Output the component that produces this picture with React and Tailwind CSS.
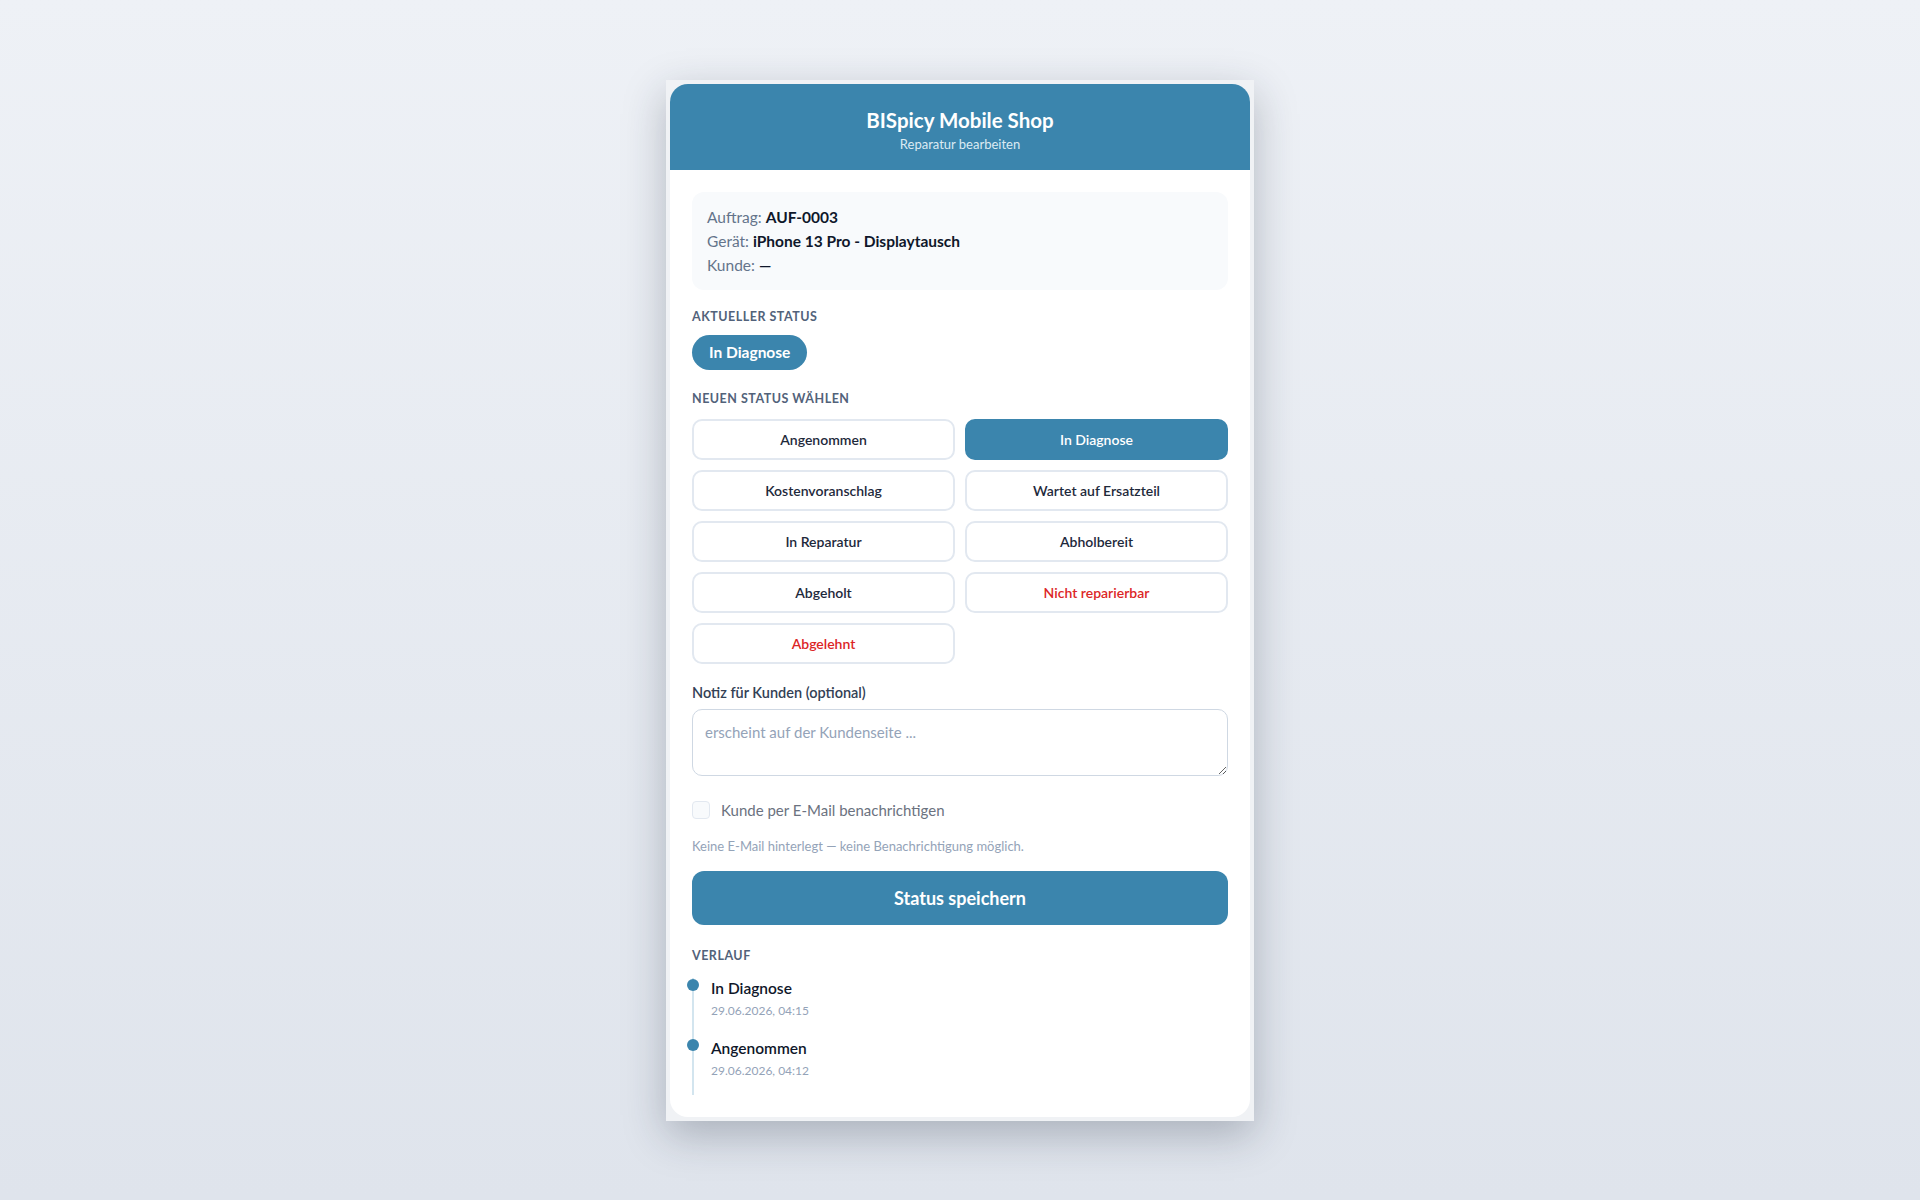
const statuses = [
  { label: 'Angenommen' },
  { label: 'In Diagnose', active: true },
  { label: 'Kostenvoranschlag' },
  { label: 'Wartet auf Ersatzteil' },
  { label: 'In Reparatur' },
  { label: 'Abholbereit' },
  { label: 'Abgeholt' },
  { label: 'Nicht reparierbar', danger: true },
  { label: 'Abgelehnt', danger: true },
]

const history = [
  { label: 'In Diagnose', date: '29.06.2026, 04:15' },
  { label: 'Angenommen', date: '29.06.2026, 04:12' },
]

function SectionLabel({ children, className = '' }) {
  return (
    <div className={`text-[12.5px] leading-[16px] font-bold uppercase tracking-[0.04em] text-[#52627a] ${className}`}>
      {children}
    </div>
  )
}

export default function App() {
  return (
    <div className="min-h-screen w-full bg-gradient-to-b from-[#eef1f6] to-[#dfe4ec] flex justify-center pt-[80px] font-['Lato','Noto_Sans',sans-serif]">
      <div className="w-[588px] h-fit bg-[#f0f2f5] p-[4px] shadow-[0_14px_40px_rgba(30,41,59,0.28)]">
        <div className="bg-white rounded-[18px] overflow-hidden">
          {/* Header */}
          <div className="bg-[#3b85ad] pt-[22px] pb-[17px] text-center">
            <div className="text-white text-[20.5px] leading-[28px] font-bold">BISpicy Mobile Shop</div>
            <div className="mt-[1px] text-[#dcebf3] text-[13px] leading-[18px]">Reparatur bearbeiten</div>
          </div>

          <div className="p-[22px]">
            {/* Info */}
            <div className="bg-[#f8fafc] rounded-[12px] px-[15px] py-[13px] text-[15.5px] leading-[24px] text-[#64748b]">
              <div>Auftrag: <span className="font-bold text-[#0f172a]">AUF-0003</span></div>
              <div>Gerät: <span className="font-bold text-[#0f172a]">iPhone 13 Pro - Displaytausch</span></div>
              <div>Kunde: <span className="font-bold text-[#0f172a]">—</span></div>
            </div>

            <SectionLabel className="mt-[19px]">Aktueller Status</SectionLabel>
            <div className="mt-[10px] flex w-fit items-center h-[35px] px-[17px] rounded-full bg-[#3b85ad] text-white text-[15.5px] font-bold">
              In Diagnose
            </div>

            <SectionLabel className="mt-[21px]">Neuen Status wählen</SectionLabel>
            <div className="mt-[12px] grid grid-cols-2 gap-[10px]">
              {statuses.map((s) => (
                <button
                  key={s.label}
                  className={
                    s.active
                      ? 'h-[41px] rounded-[10px] bg-[#3b85ad] border-2 border-[#3b85ad] text-white text-[14px] font-semibold'
                      : s.danger
                        ? 'h-[41px] rounded-[10px] bg-white border-2 border-[#e2e8f0] text-[#dc2626] text-[14px] font-semibold'
                        : 'h-[41px] rounded-[10px] bg-white border-2 border-[#e2e8f0] text-[#1e293b] text-[14px] font-semibold'
                  }
                >
                  {s.label}
                </button>
              ))}
            </div>

            {/* Note */}
            <div className="mt-[21px] text-[14.5px] leading-[16px] font-semibold text-[#334155]">Notiz für Kunden (optional)</div>
            <textarea
              className="mt-[8px] block w-full h-[67px] rounded-[10px] border border-[#cfd8e3] px-[12px] py-[12px] text-[15px] leading-[20px] text-[#0f172a] placeholder:text-[#94a3b8] outline-none"
              placeholder="erscheint auf der Kundenseite ..."
            />

            <div className="mt-[24px] flex items-center gap-[11px] h-[20px]">
              <span className="w-[18px] h-[18px] rounded-[4px] border border-[#e2e8f0] bg-[#f8fafc]" />
              <span className="text-[15px] text-[#6b7280]">Kunde per E-Mail benachrichtigen</span>
            </div>
            <div className="mt-[18px] text-[13px] leading-[16px] text-[#94a3b8]">
              Keine E-Mail hinterlegt — keine Benachrichtigung möglich.
            </div>

            <button className="mt-[17px] w-full h-[54px] rounded-[12px] bg-[#3b85ad] text-white text-[18px] font-bold">
              Status speichern
            </button>

            {/* History */}
            <SectionLabel className="mt-[23px]">Verlauf</SectionLabel>
            <div className="mt-[14px] border-l-2 border-[#d3e5ef] pl-[17px] pb-[16px] flex flex-col gap-[19px]">
              {history.map((h) => (
                <div key={h.label + h.date} className="relative">
                  <span className="absolute left-[-24px] top-[1px] w-[12px] h-[12px] rounded-full bg-[#3b85ad]" />
                  <div className="text-[15.5px] leading-[20px] font-semibold text-[#0f172a]">{h.label}</div>
                  <div className="mt-[5px] text-[12px] leading-[16px] text-[#94a3b8]">{h.date}</div>
                </div>
              ))}
            </div>
          </div>
        </div>
      </div>
    </div>
  )
}
